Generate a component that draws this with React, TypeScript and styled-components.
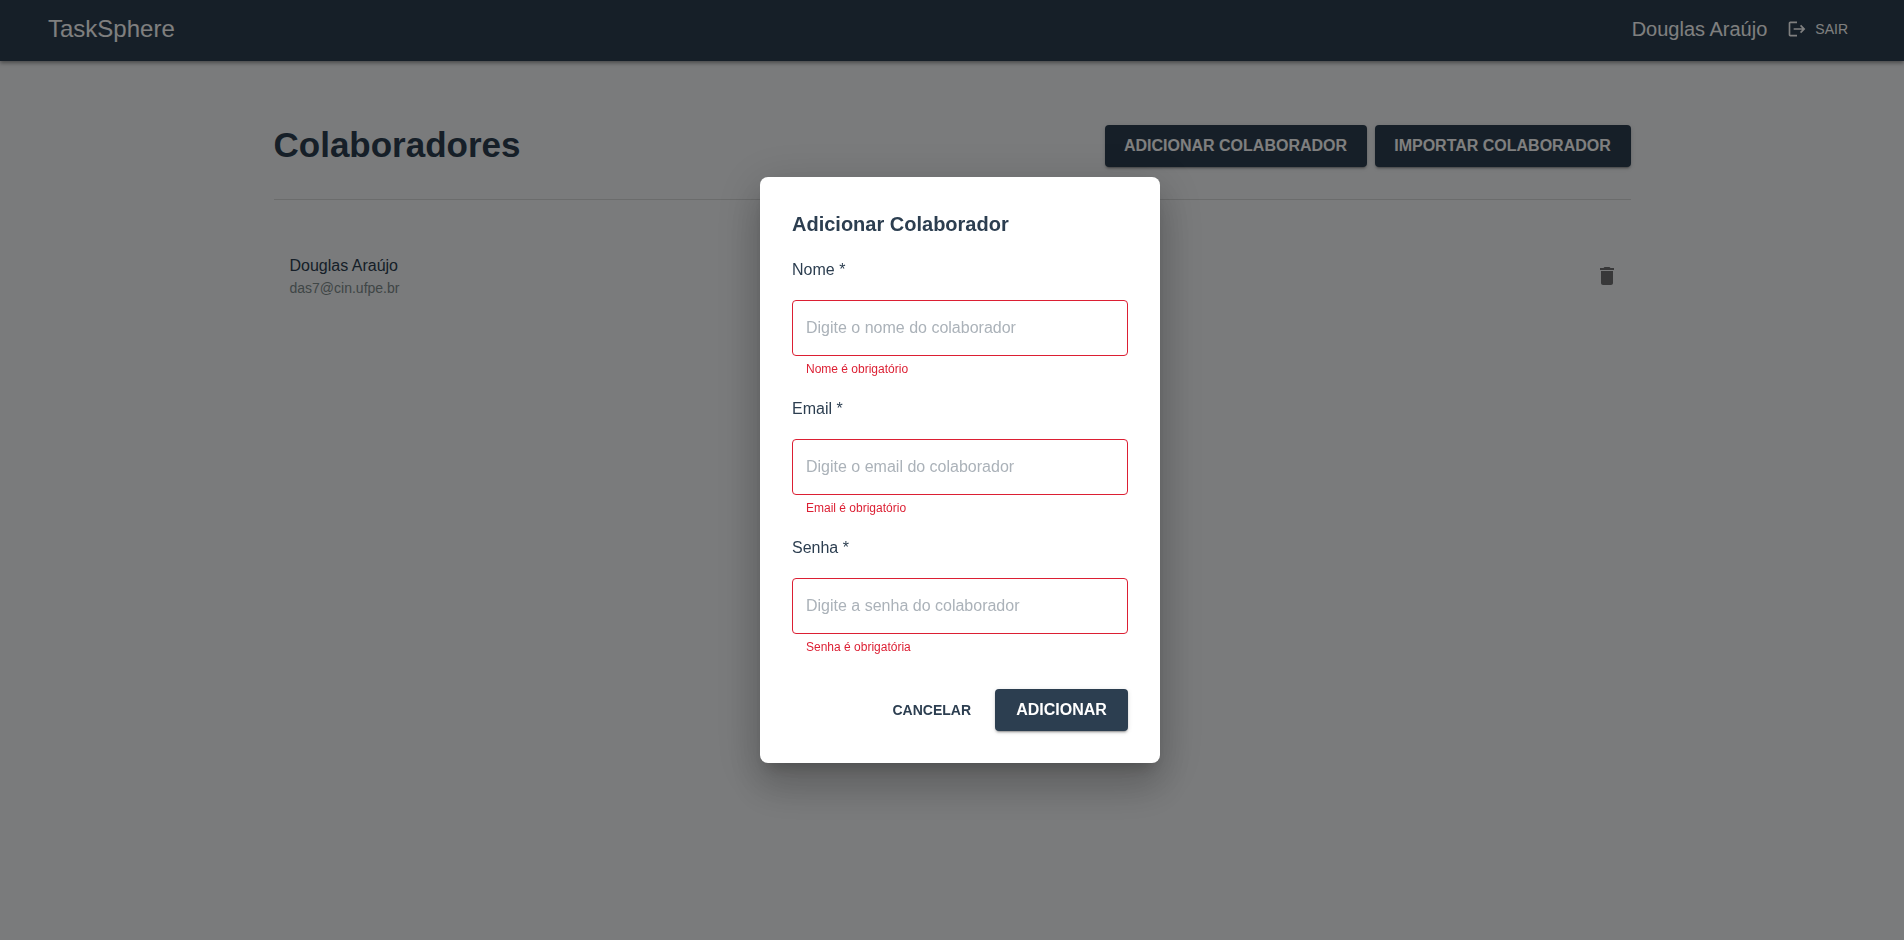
import React from "react";
import styled, { createGlobalStyle, css } from "styled-components";
import { MdDelete, MdLogout } from "react-icons/md";

const navy = "#2c3e50";
const danger = "#dc1f33";

const GlobalStyle = createGlobalStyle`
  *, *::before, *::after { box-sizing: border-box; }
  body {
    margin: 0;
    background: #f4f6f8;
    color: ${navy};
    font-family: "Liberation Sans", Arial, sans-serif;
    font-size: 16px;
    line-height: 24px;
  }
  button, input { font-family: inherit; }
  h1, h2, p, ul { margin: 0; padding: 0; }
`;

const Page = styled.div`
  min-height: 100vh;
`;

const TopBar = styled.header`
  display: flex;
  align-items: center;
  justify-content: space-between;
  padding: 12px 48px 15px;
  background: ${navy};
  color: #fff;
  box-shadow: 0 2px 4px rgba(0, 0, 0, 0.4);
`;

const Brand = styled.a`
  color: inherit;
  font-size: 24px;
  line-height: 34px;
  text-decoration: none;
`;

const Session = styled.div`
  display: flex;
  align-items: center;
  gap: 12px;
  font-size: 20px;
`;

const LogoutButton = styled.button`
  display: flex;
  align-items: center;
  gap: 8px;
  padding: 6px 8px;
  border: 0;
  background: none;
  color: inherit;
  font-size: 14px;
  line-height: 20px;
  text-transform: uppercase;
  cursor: pointer;
`;

const Content = styled.main`
  max-width: 1357px;
  margin: 0 auto;
  padding-top: 64px;
`;

const Heading = styled.div`
  display: flex;
  align-items: flex-start;
  justify-content: space-between;
  padding-bottom: 32px;
  border-bottom: 1px solid rgba(0, 0, 0, 0.12);
`;

const PageTitle = styled.h1`
  font-size: 35px;
  line-height: 40px;
`;

const Actions = styled.div`
  display: flex;
  gap: 8px;
`;

const filled = css`
  background: ${navy};
  color: #fff;
  font-size: 16px;
  box-shadow: 0 3px 1px -2px rgba(0, 0, 0, 0.2), 0 2px 2px rgba(0, 0, 0, 0.14),
    0 1px 5px rgba(0, 0, 0, 0.12);
`;

const Button = styled.button<{ $filled?: boolean; $width?: number }>`
  min-width: ${(p) => (p.$width ? `${p.$width}px` : "0")};
  padding: 8px 16px;
  border: 0;
  border-radius: 4px;
  background: none;
  color: ${navy};
  font-size: 14px;
  font-weight: 700;
  line-height: 26px;
  text-transform: uppercase;
  cursor: pointer;
  ${(p) => p.$filled && filled}
`;

const People = styled.ul`
  padding-top: 48px;
  list-style: none;
`;

const Person = styled.li`
  display: flex;
  align-items: center;
  justify-content: space-between;
  padding: 6px 16px;
`;

const Email = styled.p`
  color: #7f8c8d;
  font-size: 14px;
  line-height: 20px;
`;

const IconButton = styled.button`
  display: flex;
  padding: 8px;
  margin-right: -12px;
  border: 0;
  background: none;
  color: rgba(0, 0, 0, 0.54);
  cursor: pointer;
`;

const Backdrop = styled.div`
  position: fixed;
  inset: 0;
  display: flex;
  align-items: center;
  justify-content: center;
  padding-left: 16px;
  background: rgba(0, 0, 0, 0.5);
`;

const Dialog = styled.form`
  width: 400px;
  padding: 32px;
  border-radius: 8px;
  background: #fff;
  box-shadow: 0 11px 15px -7px rgba(0, 0, 0, 0.2), 0 24px 38px 3px rgba(0, 0, 0, 0.14),
    0 9px 46px 8px rgba(0, 0, 0, 0.12);
`;

const DialogTitle = styled.h2`
  font-size: 20px;
  line-height: 31px;
`;

const FieldBox = styled.div`
  display: flex;
  flex-direction: column;
  margin-top: 18px;
`;

const Input = styled.input`
  height: 56px;
  margin: 18px 0 3px;
  padding: 0 13px;
  border: 1px solid ${danger};
  border-radius: 4px;
  background: none;
  color: ${navy};
  font-size: 16px;
  outline: none;
  &::placeholder { color: #abb2b9; opacity: 1; }
`;

const ErrorText = styled.p`
  padding: 0 14px;
  color: ${danger};
  font-size: 12px;
  line-height: 20px;
`;

const DialogActions = styled.div`
  display: flex;
  justify-content: flex-end;
  gap: 8px;
  margin-top: 32px;
`;

interface FieldProps {
  id: string;
  label: string;
  type: string;
  placeholder: string;
  error: string;
}

const fields: FieldProps[] = [
  { id: "nome", label: "Nome *", type: "text", placeholder: "Digite o nome do colaborador", error: "Nome é obrigatório" },
  { id: "email", label: "Email *", type: "email", placeholder: "Digite o email do colaborador", error: "Email é obrigatório" },
  { id: "senha", label: "Senha *", type: "password", placeholder: "Digite a senha do colaborador", error: "Senha é obrigatória" },
];

function Field({ id, label, type, placeholder, error }: FieldProps) {
  return (
    <FieldBox>
      <label htmlFor={id}>{label}</label>
      <Input id={id} type={type} placeholder={placeholder} aria-invalid aria-describedby={`${id}-erro`} />
      <ErrorText id={`${id}-erro`}>{error}</ErrorText>
    </FieldBox>
  );
}

export default function App() {
  return (
    <Page>
      <GlobalStyle />
      <TopBar>
        <Brand href="#">TaskSphere</Brand>
        <Session>
          <span>Douglas Araújo</span>
          <LogoutButton type="button">
            <MdLogout size={20} />
            Sair
          </LogoutButton>
        </Session>
      </TopBar>
      <Content>
        <Heading>
          <PageTitle>Colaboradores</PageTitle>
          <Actions>
            <Button type="button" $filled $width={262}>Adicionar Colaborador</Button>
            <Button type="button" $filled $width={256}>Importar Colaborador</Button>
          </Actions>
        </Heading>
        <People>
          <Person>
            <div>
              <p>Douglas Araújo</p>
              <Email>das7@cin.ufpe.br</Email>
            </div>
            <IconButton type="button" aria-label="Excluir colaborador">
              <MdDelete size={24} />
            </IconButton>
          </Person>
        </People>
      </Content>
      <Backdrop>
        <Dialog role="dialog" aria-modal="true" aria-labelledby="dialog-title" noValidate>
          <DialogTitle id="dialog-title">Adicionar Colaborador</DialogTitle>
          {fields.map((field) => (
            <Field key={field.id} {...field} />
          ))}
          <DialogActions>
            <Button type="button">Cancelar</Button>
            <Button type="submit" $filled $width={133}>Adicionar</Button>
          </DialogActions>
        </Dialog>
      </Backdrop>
    </Page>
  );
}
